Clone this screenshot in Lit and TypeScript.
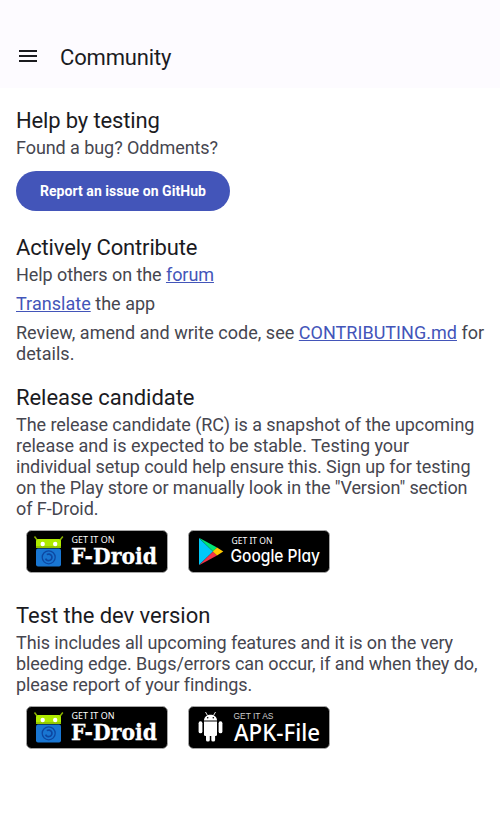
import { LitElement, html, css, svg } from "lit";
import { customElement, property } from "lit/decorators.js";

const fdroidArt = svg`
  <path d="M8.5 6.5l3.8 5M36.8 6.5l-3.8 5" stroke="#8ab000" stroke-width="1.5" fill="none"/>
  <rect x="10" y="9" width="25" height="9" rx="2" fill="#aeea00"/>
  <rect x="10" y="16" width="25" height="2" fill="#95c700"/>
  <circle cx="16.7" cy="14" r="2.2" fill="#fff"/><circle cx="29.2" cy="14" r="2.2" fill="#fff"/>
  <rect x="10" y="18.5" width="25" height="18" rx="2" fill="#1976d2"/>
  <circle cx="22.7" cy="27.3" r="6.5" fill="none" stroke="#0d47a1" stroke-width="1.3"/>
  <path d="M19.6 28.6a3.3 3.3 0 1 0 1.2-4" fill="none" stroke="#0d47a1" stroke-width="1.7"/>
  <text class="sans" x="45.5" y="12.8" font-size="8.8" textLength="43" lengthAdjust="spacingAndGlyphs">GET IT ON</text>
  <text class="slab" x="45" y="34.3" font-size="23" textLength="86" lengthAdjust="spacingAndGlyphs">F-Droid</text>`;

const playArt = svg`
  <path d="M11 8v27L25 21.5z" fill="#00c8f8"/>
  <path d="M11 7.8L29 17.6l-4 4z" fill="#00e676"/>
  <path d="M11 35.2L29 25.4l-4-3.9z" fill="#f43249"/>
  <path d="M29 17.4l6.3 4.1-6.3 4-4.2-4z" fill="#ffc900"/>
  <text class="sans" x="43.5" y="14" font-size="8.6" textLength="41" lengthAdjust="spacingAndGlyphs">GET IT ON</text>
  <text class="geo" x="42.5" y="31.5" font-size="17.5" textLength="89.5" lengthAdjust="spacingAndGlyphs">Google Play</text>`;

const apkArt = svg`
  <g fill="#fff">
    <path d="M16 14.5c0-7.8 13-7.8 13 0z"/>
    <path d="M17.5 6l2 3.5M27.5 6l-2 3.5" stroke="#fff" stroke-width=".9"/>
    <path d="M16 15.5h13v13a1.5 1.5 0 0 1-1.5 1.5h-10a1.5 1.5 0 0 1-1.5-1.5z"/>
    <rect x="10.6" y="15.3" width="3.8" height="12" rx="1.9"/>
    <rect x="30.6" y="15.3" width="3.8" height="12" rx="1.9"/>
    <rect x="18" y="27" width="3.8" height="8.6" rx="1.7"/>
    <rect x="23.3" y="27" width="3.8" height="8.6" rx="1.7"/>
  </g>
  <circle cx="19.7" cy="11.7" r=".8"/><circle cx="25.3" cy="11.7" r=".8"/>
  <text class="thin" x="45.5" y="13" font-size="8.6" textLength="40" lengthAdjust="spacingAndGlyphs">GET IT AS</text>
  <text class="noto" x="46" y="34.5" font-size="23" textLength="86" lengthAdjust="spacingAndGlyphs">APK-File</text>`;

const art = { fdroid: fdroidArt, play: playArt, apk: apkArt };

@customElement("store-badge")
class StoreBadge extends LitElement {
  @property() kind: keyof typeof art = "fdroid";
  static styles = css`
    :host { display: block; width: 142px; height: 43px; }
    svg { display: block; }
    text { fill: #fff; }
    .sans { font-family: "Noto Sans", sans-serif; }
    .thin { font-family: "Liberation Sans", sans-serif; fill: #ccc; }
    .slab { font-family: "DejaVu Serif", serif; font-weight: 700; stroke: #fff; stroke-width: 0.3px; }
    .geo { font-family: Inter, sans-serif; font-weight: 500; font-feature-settings: "cv11"; }
    .noto { font-family: "Noto Sans", sans-serif; font-weight: 500; }
  `;
  render() {
    return html`<svg width="142" height="43" viewBox="0 0 142 43">
      <rect x=".5" y=".5" width="141" height="42" rx="5" fill="#000" stroke="#a6a6a6"/>
      ${art[this.kind]}
    </svg>`;
  }
}

@customElement("app-root")
class AppRoot extends LitElement {
  static styles = css`
    :host {
      display: block;
      height: 833px;
      background: #fff;
      color: #46464f;
      font: 400 18px/21px Roboto, sans-serif;
    }
    header {
      display: flex;
      align-items: center;
      gap: 20px;
      box-sizing: border-box;
      height: 88px;
      padding: 28px 16px 0;
      background: #fdfbff;
      color: #1b1b1f;
    }
    header svg { display: block; margin-top: -4px; }
    h1, h2 { margin: 0; font-size: 22px; line-height: 26px; font-weight: 400; color: #1b1b1f; letter-spacing: -0.15px; }
    main { padding: 20px 14px 0 16px; }
    h2 { margin-bottom: 3px; }
    h2.loose { letter-spacing: -0.05px; }
    p { margin: 0 0 8px; letter-spacing: -0.07px; white-space: nowrap; }
    p.wide { letter-spacing: 0.03px; }
    .tight { letter-spacing: -0.1px; }
    .mid { letter-spacing: -0.07px; }
    .even { letter-spacing: 0; }
    a { color: #4355b9; text-decoration: underline; }
    section { margin-bottom: 21px; }
    .testing { margin-bottom: 24px; }
    .candidate { margin-bottom: 30px; }
    button {
      display: block;
      margin-top: 13px;
      width: 214px;
      height: 40px;
      padding: 0;
      border: 0;
      border-radius: 20px;
      background: #4355b9;
      color: #fff;
      font: 700 14px/20px Roboto, sans-serif;
      letter-spacing: 0.06px;
    }
    .badges { display: flex; gap: 20px; margin: 11px 0 0 10px; }
  `;
  render() {
    return html`
      <header>
        <svg width="24" height="24" viewBox="0 0 24 24"><path d="M3 6h18v2H3zM3 11h18v2H3zM3 16h18v2H3z" fill="#1b1b1f"/></svg>
        <h1>Community</h1>
      </header>
      <main>
        <section class="testing">
          <h2>Help by testing</h2>
          <p>Found a bug? Oddments?</p>
          <button>Report an issue on GitHub</button>
        </section>
        <section>
          <h2>Actively Contribute</h2>
          <p>Help others on the <a>forum</a></p>
          <p class="wide"><a>Translate</a> the app</p>
          <p class="wide">Review, amend and write code, see <a>CONTRIBUTING.md</a> for<br>details.</p>
        </section>
        <section class="candidate">
          <h2 class="loose">Release candidate</h2>
          <p>The release candidate (RC) is a snapshot of the upcoming<br><span class="even">release and is expected to be stable. Testing your</span><br><span class="tight">individual setup could help ensure this. Sign up for testing</span><br><span class="tight">on the Play store or manually look in the "Version" section</span><br>of F-Droid.</p>
          <div class="badges"><store-badge kind="fdroid"></store-badge><store-badge kind="play"></store-badge></div>
        </section>
        <section>
          <h2 class="loose">Test the dev version</h2>
          <p class="tight">This includes all upcoming features and it is on the very<br><span class="mid">bleeding edge. Bugs/errors can occur, if and when they do,</span><br>please report of your findings.</p>
          <div class="badges"><store-badge kind="fdroid"></store-badge><store-badge kind="apk"></store-badge></div>
        </section>
      </main>`;
  }
}
